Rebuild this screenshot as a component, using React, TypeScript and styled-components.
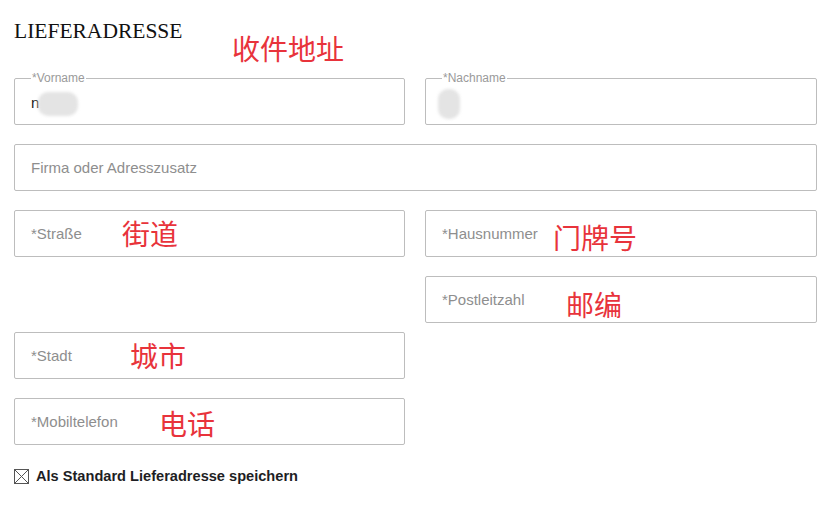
import styled, { createGlobalStyle } from "styled-components";

const GlobalStyle = createGlobalStyle`
  body {
    margin: 0;
    background: #fff;
    font-family: "Liberation Sans", Arial, sans-serif;
  }
`;

const Page = styled.div`
  position: relative;
  padding: 19px 21px 0 14px;
  width: 838px;
  height: 507px;
  box-sizing: border-box;
`;

const Title = styled.h2`
  margin: 0 0 35px;
  font-family: "Liberation Serif", "Times New Roman", serif;
  font-weight: 400;
  font-size: 21.5px;
  line-height: 24px;
  color: #111;
`;

const FormGrid = styled.div`
  display: grid;
  grid-template-columns: 391px 392px;
  column-gap: 20px;
  row-gap: 19px;
`;

const Field = styled.div<{ $col?: string; $pull?: number }>`
  position: relative;
  grid-column: ${(p) => p.$col ?? "auto"};
  margin-top: ${(p) => (p.$pull ? -p.$pull : 0)}px;
  height: 47px;
  box-sizing: border-box;
  border: 1px solid #bdbdbd;
  border-radius: 2px;
  display: flex;
  align-items: center;
  padding: 0 16px;
`;

const Legend = styled.span`
  position: absolute;
  top: -8px;
  left: 16px;
  padding: 0 1px;
  background: #fff;
  font-size: 12px;
  line-height: 14px;
  color: #9a9a9a;
`;

const Placeholder = styled.span`
  font-size: 15px;
  color: #8e8e8e;
`;

const Value = styled.span`
  font-size: 15px;
  color: #222;
  margin-top: 2px;
`;

// blurred privacy patch over entered values
const Smudge = styled.span<{ $w: number; $h: number; $dx: number }>`
  display: inline-block;
  width: ${(p) => p.$w}px;
  height: ${(p) => p.$h}px;
  margin-left: ${(p) => p.$dx}px;
  margin-top: 4px;
  border-radius: 10px;
  background: #e4e4e4;
  filter: blur(1.5px);
`;

const Note = styled.span<{ $x: number; $y: number }>`
  position: absolute;
  left: ${(p) => p.$x}px;
  top: ${(p) => p.$y}px;
  font-family: "Noto Sans CJK SC", sans-serif;
  font-size: 28px;
  line-height: 30px;
  color: #e8333b;
  white-space: nowrap;
`;

const CheckRow = styled.label`
  display: flex;
  align-items: center;
  gap: 7px;
  margin-top: 23px;
  font-size: 14.6px;
  font-weight: 700;
  color: #1e1e24;
`;

const Box = () => (
  <svg width="15" height="15" viewBox="0 0 15 15">
    <rect x="0.5" y="0.5" width="14" height="14" fill="none" stroke="#555" />
    <path d="M1 1 L14 14 M14 1 L1 14" stroke="#555" strokeWidth="1" />
  </svg>
);

export default function App() {
  return (
    <>
      <GlobalStyle />
      <Page>
        <Title>LIEFERADRESSE</Title>
        <FormGrid>
          <Field>
            <Legend>*Vorname</Legend>
            <Value>n</Value>
            <Smudge $w={40} $h={24} $dx={-1} />
          </Field>
          <Field>
            <Legend>*Nachname</Legend>
            <Smudge $w={22} $h={30} $dx={-4} />
          </Field>
          <Field $col="1 / 3">
            <Placeholder>Firma oder Adresszusatz</Placeholder>
          </Field>
          <Field>
            <Placeholder>*Straße</Placeholder>
          </Field>
          <Field>
            <Placeholder>*Hausnummer</Placeholder>
          </Field>
          <Field $col="2">
            <Placeholder>*Postleitzahl</Placeholder>
          </Field>
          <Field $col="1" $pull={10}>
            <Placeholder>*Stadt</Placeholder>
          </Field>
          <Field $col="1">
            <Placeholder>*Mobiltelefon</Placeholder>
          </Field>
        </FormGrid>
        <CheckRow>
          <Box />
          Als Standard Lieferadresse speichern
        </CheckRow>

        <Note $x={232} $y={33}>收件地址</Note>
        <Note $x={122} $y={218}>街道</Note>
        <Note $x={553} $y={222}>门牌号</Note>
        <Note $x={566} $y={289}>邮编</Note>
        <Note $x={130} $y={340}>城市</Note>
        <Note $x={159} $y={408}>电话</Note>
      </Page>
    </>
  );
}
